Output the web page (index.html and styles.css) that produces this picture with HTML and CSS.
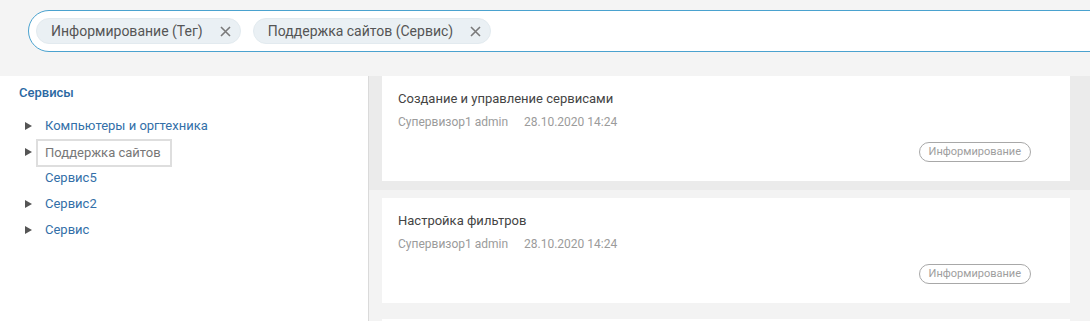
FILE: index.html
```html
<!DOCTYPE html>
<html lang="ru">
<head>
  <meta charset="UTF-8" />
  <title>База знаний</title>
  <link rel="stylesheet" href="styles.css">
</head>
<body>

  <!-- Search with filter chips -->
  <div class="topbar">
    <div class="search">
      <span class="chip">Информирование (Тег)
        <svg class="chip-x" width="11" height="11" viewBox="0 0 11 11"><path d="M1 1L10 10M10 1L1 10" /></svg>
      </span>
      <span class="chip">Поддержка сайтов (Сервис)
        <svg class="chip-x" width="11" height="11" viewBox="0 0 11 11"><path d="M1 1L10 10M10 1L1 10" /></svg>
      </span>
    </div>
  </div>

  <div class="main">

    <!-- Service tree -->
    <div class="sidebar">
      <div class="side-title">Сервисы</div>
      <ul class="tree">
        <li><span class="arrow"></span><span class="label">Компьютеры и оргтехника</span></li>
        <li><span class="arrow"></span><span class="label focused">Поддержка сайтов</span></li>
        <li><span class="arrow none"></span><span class="label">Сервис5</span></li>
        <li><span class="arrow"></span><span class="label">Сервис2</span></li>
        <li><span class="arrow"></span><span class="label">Сервис</span></li>
      </ul>
    </div>

    <!-- Articles -->
    <div class="feed">
      <div class="item active">
        <div class="card">
          <div class="card-title">Создание и управление сервисами</div>
          <div class="card-meta"><span>Супервизор1 admin</span><span class="date">28.10.2020 14:24</span></div>
          <div class="card-tags"><span class="tag">Информирование</span></div>
        </div>
      </div>
      <div class="item">
        <div class="card">
          <div class="card-title">Настройка фильтров</div>
          <div class="card-meta"><span>Супервизор1 admin</span><span class="date">28.10.2020 14:24</span></div>
          <div class="card-tags"><span class="tag">Информирование</span></div>
        </div>
      </div>
      <div class="item">
        <div class="card empty"></div>
      </div>
    </div>

  </div>

</body>
</html>
```

FILE: styles.css
```css
body {
  margin: 0;
  background-color: #f4f4f4;
  font-family: Roboto, "Liberation Sans", sans-serif;
  color: #444;
  overflow: hidden;
}
.topbar {
  height: 76px;
  box-sizing: border-box;
  padding: 10px 0 0 28px;
  background-color: #f4f4f4;
}
.search {
  height: 42px;
  box-sizing: border-box;
  margin-right: -30px;
  border: 1px solid #4aa2cf;
  border-radius: 21px;
  background-color: #fff;
  display: flex;
  align-items: center;
  gap: 12px;
  padding-left: 7px;
}
.chip {
  height: 26px;
  box-sizing: border-box;
  display: inline-flex;
  align-items: center;
  padding: 0 9px 0 14px;
  border: 1px solid #e2eaef;
  border-radius: 13px;
  background-color: #eaf0f4;
  color: #555;
  font-size: 14px;
  white-space: nowrap;
}
.chip-x {
  margin-left: 17px;
  fill: none;
  stroke: #7a7a7a;
  stroke-width: 1.6;
}
.main {
  display: flex;
  height: 245px;
  overflow: hidden;
}
.sidebar {
  width: 368px;
  flex-shrink: 0;
  background-color: #fff;
  border-right: 1px solid #dadada;
}
.side-title {
  margin: 8px 0 0 19px;
  line-height: 18px;
  font-size: 13px;
  font-weight: 500;
  color: #2a68a2;
}
.tree {
  list-style-type: none;
  margin: 11px 0 0 0;
  padding-left: 25px;
}
.tree li {
  height: 26px;
  display: flex;
  align-items: center;
}
.arrow {
  width: 0;
  height: 0;
  border-top: 4px solid transparent;
  border-bottom: 4px solid transparent;
  border-left: 7px solid #555;
  margin-right: 13px;
}
.arrow.none {
  border-left-color: transparent;
}
.label {
  font-size: 13px;
  line-height: 18px;
  color: #336fa8;
}
.label.focused {
  color: #777;
  padding: 3px 9px 3px 7px;
  margin: 1px -9px -1px -7px;
  box-shadow: 0 0 0 2px #dedede;
}
.feed {
  flex: 1;
  margin-top: -8px;
}
.item {
  padding: 8px 20px 8px 13px;
  background-color: #f3f3f3;
}
.item.active {
  background-color: #ebebeb;
}
.item.active .card {
  margin-bottom: 1px;
}
.card {
  background-color: #fff;
  padding: 15px 16px 19px 16px;
}
.card.empty {
  height: 80px;
}
.card-title {
  font-size: 13px;
  line-height: 16px;
  color: #444;
}
.card-meta {
  margin-top: 7px;
  font-size: 12px;
  line-height: 16px;
  color: #9b9b9b;
}
.date {
  margin-left: 16px;
}
.card-tags {
  margin-top: 12px;
  display: flex;
  justify-content: flex-end;
  padding-right: 23px;
}
.tag {
  height: 20px;
  box-sizing: border-box;
  padding: 0 9px;
  border: 1px solid #a8a8a8;
  border-radius: 10px;
  font-size: 11px;
  line-height: 18px;
  color: #9e9e9e;
}
```
